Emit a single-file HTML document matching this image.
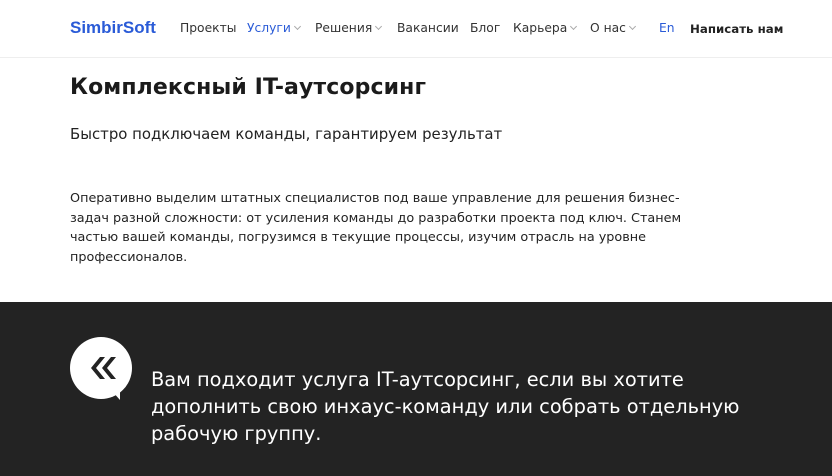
<!DOCTYPE html>
<html><head><meta charset="utf-8"><style>
*{margin:0;padding:0;box-sizing:border-box}
body{width:832px;height:476px;background:#fff;font-family:"DejaVu Sans","Liberation Sans",sans-serif;color:#1f1f1f;position:relative;overflow:hidden}
.hdr{position:absolute;left:0;top:0;width:832px;height:58px;border-bottom:1px solid #eeeeee}
.logo{position:absolute;left:70px;top:18px;font:bold 17px "Liberation Sans",sans-serif;color:#2a5bd7;letter-spacing:0px}
.nav{position:absolute;top:21px;font-size:12.3px;color:#333;white-space:nowrap}
.nav span{position:absolute;white-space:nowrap}
.ch{display:inline-block;width:5px;height:5px;border-right:1px solid #aaa;border-bottom:1px solid #aaa;transform:rotate(45deg);margin-left:4px;position:relative;top:-3px}
h1{position:absolute;left:70px;top:75px;font-size:22px;font-weight:bold;color:#1b1b1b;letter-spacing:0.1px}
.sub{position:absolute;left:70px;top:125px;font-size:14.9px;color:#222}
.p{position:absolute;left:70px;top:189px;width:660px;font-size:12.8px;line-height:19.7px;color:#222}
.dark{position:absolute;left:0;top:302px;width:832px;height:174px;background:#232323}
.q{position:absolute;left:151px;font-size:19.4px;line-height:27px;color:#fff;white-space:nowrap}
</style></head><body>
<div class="hdr">
<div class="logo">SimbirSoft</div>
<div class="nav">
<span style="left:180px">Проекты</span>
<span style="left:247px;color:#2a5bd7">Услуги<i class="ch"></i></span>
<span style="left:315px">Решения<i class="ch"></i></span>
<span style="left:397px">Вакансии</span>
<span style="left:470px">Блог</span>
<span style="left:513px">Карьера<i class="ch"></i></span>
<span style="left:590px">О нас<i class="ch"></i></span>
<span style="left:659px;color:#2a5bd7">En</span>
<span style="left:690px;font-weight:bold;color:#222;font-size:11.8px;top:1px">Написать нам</span>
</div>
</div>
<h1>Комплексный IT-аутсорсинг</h1>
<div class="sub">Быстро подключаем команды, гарантируем результат</div>
<div class="p">Оперативно выделим штатных специалистов под ваше управление для решения бизнес-<br>задач разной сложности: от усиления команды до разработки проекта под ключ. Станем<br>частью вашей команды, погрузимся в текущие процессы, изучим отрасль на уровне<br>профессионалов.</div>
<div class="dark">
<svg style="position:absolute;left:68px;top:34px" width="68" height="68" viewBox="0 0 68 68">
<circle cx="33" cy="32" r="31" fill="#fff"/>
<path d="M44 55 L52 64 L52 50 Z" fill="#fff"/>
<path d="M32 21 L23 32 L32 43 L37 43 L28 32 L37 21 Z M43 21 L34 32 L43 43 L48 43 L39 32 L48 21 Z" fill="#232323"/>
</svg>
<div class="q" style="top:64px">Вам подходит услуга IT-аутсорсинг, если вы хотите<br>дополнить свою инхаус-команду или собрать отдельную<br>рабочую группу.</div>
</div>
</body></html>
